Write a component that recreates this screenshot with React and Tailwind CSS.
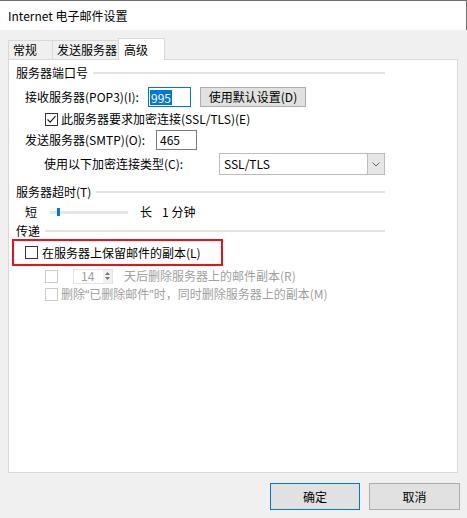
import React from 'react';

const FONT = { fontFamily: '"Noto Sans CJK SC", "Noto Sans", sans-serif' };
const LATIN = { fontFamily: '"Noto Sans", sans-serif' };

const CheckBox = ({ checked = false, disabled = false }) => (
  <div
    className={`w-[13px] h-[13px] shrink-0 bg-white border flex items-center justify-center ${
      disabled ? 'border-[#cccccc]' : 'border-[#333333]'
    }`}
  >
    {checked && (
      <svg width="11" height="11" viewBox="0 0 11 11">
        <path d="M1.5 5.5 L4.2 8.2 L9.5 2.2" fill="none" stroke="#222" strokeWidth="1.2" />
      </svg>
    )}
  </div>
);

const GroupHeader = ({ label }) => (
  <div className="flex items-center h-[16px] w-[369px]">
    <span className="leading-[16px] whitespace-nowrap">{label}</span>
    <div className="flex-1 h-[2px] bg-[#e3e3e3] ml-[5px]" />
  </div>
);

const Tab = ({ label, active, width }) =>
  active ? (
    <div className={`h-[22px] pl-[5px] bg-white border border-b-0 border-[#d9d9d9] relative z-10 -mb-px flex items-center ${width}`}>
      <span className="leading-[16px]">{label}</span>
    </div>
  ) : (
    <div className={`h-[19px] pl-[4px] bg-[#f0f0f0] border border-b-0 border-r-0 border-[#d9d9d9] flex items-center ${width}`}>
      <span className="leading-[16px]">{label}</span>
    </div>
  );

const Button = ({ label, focused, className = '' }) => (
  <div
    className={`bg-[#e1e1e1] border flex items-center justify-center leading-[16px] ${
      focused ? 'border-[#0078d7]' : 'border-[#adadad]'
    } ${className}`}
  >
    {label}
  </div>
);

export default function App() {
  return (
    <div className="w-[467px] h-[518px] bg-[#f0f0f0] text-[12px] text-black flex flex-col" style={FONT}>
      {/* title bar */}
      <div className="h-[30px] bg-white border-t border-r border-[#707070] flex items-center pl-[8px]">
        <span className="leading-[16px]">Internet 电子邮件设置</span>
      </div>

      {/* tabs */}
      <div className="flex items-end pl-[8px] mt-[8px]">
        <Tab label="常规" width="w-[44px]" />
        <Tab label="发送服务器" width="w-[66px]" />
        <Tab label="高级" width="w-[47px]" active />
      </div>

      {/* panel */}
      <div className="ml-[8px] w-[450px] h-[414px] bg-white border border-[#d9d9d9] pl-[7px] pt-[5px]">
        <GroupHeader label="服务器端口号" />

        <div className="flex items-center mt-[6px] h-[20px]">
          <span className="w-[132px] pl-[9px] leading-[16px] whitespace-nowrap">接收服务器(POP3)(I):</span>
          <div className="w-[43px] h-[20px] bg-white border border-[#0078d7] flex items-center pl-[1px]">
            <span className="bg-[#0078d7] text-white leading-[15px] px-[1px]">995</span>
          </div>
          <Button label="使用默认设置(D)" className="ml-[9px] w-[106px] h-[20px]" />
        </div>

        <div className="flex items-center mt-[4px] h-[16px] pl-[29px]">
          <CheckBox checked />
          <span className="ml-[3px] leading-[16px] whitespace-nowrap">此服务器要求加密连接(SSL/TLS)(E)</span>
        </div>

        <div className="flex items-center mt-[3px] h-[20px]">
          <span className="w-[140px] pl-[9px] leading-[16px] whitespace-nowrap">发送服务器(SMTP)(O):</span>
          <div className="w-[41px] h-[20px] bg-white border border-[#7a7a7a] flex items-center pl-[3px]">
            <span className="leading-[16px]">465</span>
          </div>
        </div>

        <div className="flex items-center mt-[3px] h-[22px]">
          <span className="w-[203px] pl-[28px] leading-[16px] whitespace-nowrap">使用以下加密连接类型(C):</span>
          <div className="w-[166px] h-[22px] bg-white border border-[#bcbcbc] flex items-stretch">
            <div className="flex-1 flex items-center pl-[4px] leading-[16px]">SSL/TLS</div>
            <div className="w-[17px] bg-[#e6e6e6] border-l border-[#bcbcbc] flex items-center justify-center">
              <svg width="8" height="5" viewBox="0 0 8 5">
                <path d="M0.5 0.5 L4 4 L7.5 0.5" fill="none" stroke="#606060" strokeWidth="1" />
              </svg>
            </div>
          </div>
        </div>

        <div className="mt-[9px]">
          <GroupHeader label="服务器超时(T)" />
        </div>

        <div className="flex items-center mt-[4px] h-[16px] pl-[9px]">
          <span className="leading-[16px]">短</span>
          <div className="ml-[13px] w-[78px] h-[3px] bg-[#e7e7e7] relative">
            <div className="absolute left-[7px] -top-[3px] w-[3px] h-[8px] bg-[#0078d7]" />
          </div>
          <span className="ml-[12px] leading-[16px]">长</span>
          <span className="ml-[10px] leading-[16px]">1 分钟</span>
        </div>

        <div className="mt-[3px]">
          <GroupHeader label="传递" />
        </div>

        <div className="ml-[-4px] w-[211px] h-[27px] border-2 border-[#e8111d] flex items-center pl-[11px]">
          <CheckBox />
          <span className="ml-[4px] leading-[16px] whitespace-nowrap">在服务器上保留邮件的副本(L)</span>
        </div>

        <div className="flex items-center mt-[2px] h-[16px] pl-[29px] text-[#a0a0a0]">
          <CheckBox disabled />
          <div className="ml-[15px] w-[40px] h-[15px] border border-[#e3e3e3] flex items-center pl-[7px]">
            <span className="leading-[14px] flex-1">14</span>
            <div className="w-[9px] h-full flex flex-col items-center justify-center gap-[2px] bg-[#f0f0f0]">
              <svg width="5" height="3" viewBox="0 0 5 3">
                <path d="M0 3 L2.5 0 L5 3 Z" fill="#777" />
              </svg>
              <svg width="5" height="3" viewBox="0 0 5 3">
                <path d="M0 0 L2.5 3 L5 0 Z" fill="#777" />
              </svg>
            </div>
          </div>
          <span className="ml-[11px] leading-[16px] whitespace-nowrap">天后删除服务器上的邮件副本(R)</span>
        </div>

        <div className="flex items-center mt-[2px] h-[16px] pl-[29px] text-[#a0a0a0]">
          <CheckBox disabled />
          <span className="ml-[3px] leading-[16px] whitespace-nowrap">
            删除<span style={LATIN}>“</span>已删除邮件<span style={LATIN}>”</span>时，同时删除服务器上的副本(M)
          </span>
        </div>
      </div>

      {/* buttons */}
      <div className="flex justify-end gap-[9px] pr-[7px] mt-[10px]">
        <Button label="确定" focused className="w-[90px] h-[27px]" />
        <Button label="取消" className="w-[91px] h-[27px]" />
      </div>
    </div>
  );
}
